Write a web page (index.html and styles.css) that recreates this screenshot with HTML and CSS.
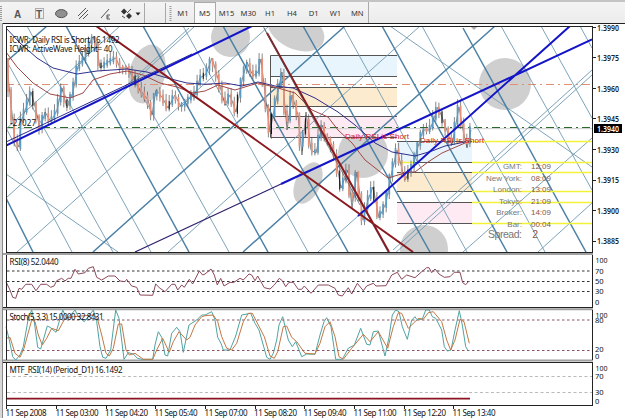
FILE: index.html
```
<!DOCTYPE html>
<html>
<head>
    <meta charset="utf-8">
    <title>Chart</title>
    <link rel="stylesheet" href="styles.css">
</head>
<body>
<div class="toolbar">
    <svg class="tools" width="172" height="21" viewBox="0 2 172 21">
        <path class="grip" d="M1 6V22"/>
        <text class="tool-letter" x="14" y="18" textLength="7">A</text>
        <rect class="dotted" x="35.5" y="8.500" width="8" height="10"/>
        <text class="tool-letter" x="36" y="17.500" textLength="7">T</text>
        <ellipse cx="61.300" cy="13.600" rx="5.800" ry="4" fill="#909090" stroke="#555"/>
        <path class="stroke" d="M78 16L86 8M79 19L88 10M83 19L88 14"/>
        <path class="stroke" d="M101 18L109 9M110 15H107V19H110M107 17H109"/>
        <path d="M124 8.500l3 3-3 3-3-3zM129 13l3 3-3 3-3-3z" fill="#333"/>
        <path class="stroke" d="M127 13L131 9M122 16L125 18"/>
        <path d="M135.500 12.500h5l-2.500 3z" fill="#222"/>
        <path d="M144.500 3V23M165.500 3V23" stroke="#a8a8a8"/>
        <path class="grip" d="M170.500 6V22"/>
    </svg>
    <div class="frames">
        <span>M1</span><span class="active">M5</span><span>M15</span><span>M30</span><span>H1</span><span>H4</span><span>D1</span><span>W1</span><span>MN</span>
    </div>
</div>
<div class="terminal">
    <svg class="panel" width="622" height="230" viewBox="3 23 622 230">
        <defs><clipPath id="plot"><rect x="6" y="26" width="586" height="226"/></clipPath></defs>
        <g clip-path="url(#plot)">
            <g fill="#cfcfcf">
                <ellipse cx="147" cy="74" rx="18" ry="30" transform="rotate(14 147 74)"/>
                <circle cx="230.500" cy="37.500" r="19.500"/>
                <ellipse cx="296" cy="30" rx="30" ry="19" transform="rotate(25 296 30)"/>
                <circle cx="505" cy="84" r="26"/>
                <ellipse cx="308" cy="183" rx="12.500" ry="22" transform="rotate(25 308 183)"/>
                <circle cx="363" cy="153" r="25"/>
                <circle cx="424" cy="249" r="24"/>
            </g>
            <!-- fibo zones -->
            <path d="M271 56H397V76H271z" fill="#e8f5fd"/>
            <path d="M271 88H397V106H271z" fill="#fdebd0"/>
            <path d="M271 117H397V137H271z" fill="#fdeaf2"/>
            <path d="M397 142H472V162H397z" fill="#e8f5fd"/>
            <path d="M397 173H472V191H397z" fill="#fdebd0"/>
            <path d="M397 203H472V223H397z" fill="#fdeaf2"/>
            <path class="fibo" d="M397 55.500H270.500V137.500H397M270 76.500H397M270 87.500H397M270 106.500H397M270 116.500H397M397 141.500H472M397 162.500H472M397 172.500H472M397 191.500H472M397 202.500H472M397 223.500H472"/>
            <path d="M6 84.500H592" stroke="#e09070" stroke-dasharray="8 4 2 4"/>
            <path d="M6 128.700H592" stroke="#ccc"/>
            <path d="M6 127.500H592" stroke="#2c6a2c" stroke-dasharray="8 4 2 4"/>
            <!-- pitchfork grid -->
            <path class="grid" d="M6 128L72 252M6 60L113 252M27 26L151 252M104 26L229 252M183 26L308 252M263 26L388 252M343 26L467 252M422 26L545 252M501 26L592 190M541 26L592 118M580 26L592 48"/>
            <path class="grid" d="M6 129L120 26M6 198L195 26M43 162L189 28M17 252L269 26M168 252L420 26M318 252L358 216M393 250L592 70M393 255L592 75M463 252L592 138M538 252L592 203M6 174L118 252M390 26L592 167"/>
            <path class="grid thick" d="M6 198L33 252M66 26L189 252M143 26L268 252M223 26L348 252M303 26L430 252M382 26L507 252M463 28L586 252M6 62L47 26M93 252L345 26M243 252L495 26"/>
            <path class="level" d="M472 141.500H592M472 162.500H592M472 172.500H592M472 191.500H592M472 202.500H592M472 223.500H592M397 162.500H413"/>
            <g id="candles"></g>
            <path class="ma-slow" d="M6 28L20 43 37 58 53 68 77 74 97 71 127 69 147 72 167 78 187 83 205 84.300 225 83 242 86 258 82 275 86 293 88 315 98 338 112 355 125 375 143 392 152 398 153 415 156 432 151 445 146 465 142"/>
            <path class="ma-fast" d="M6 52L17 67 33 83 50 94 70 98 83 93 93 80 110 74 127 71 143 75 160 83 177 87 193 93 205 91 218 85 235 90 258 83 278 88 295 93 312 110 328 117 338 130 352 143 365 160 388 178 408 172 415 172 428 162 442 153 465 143"/>
            <path d="M6 142L192 54" stroke="#2a2a8c"/>
            <path d="M135 252L281 184" stroke="#30206e" stroke-width="1.200"/>
            <path d="M6 145.500L252 26M281 184L592 39.500M358 216L570 26" stroke="#1414c8" stroke-width="2"/>
            <path d="M96 26L413 252M267 33L389 252" stroke="#8a1a20" stroke-width="2"/>
            <path d="M264 28L360 205" stroke="#555" stroke-width=".7"/>
            <path d="M470 26h8l-4 4z" fill="#aaa"/>
            <text class="label" x="9.500" y="43" textLength="110">ICWR: Daily RSI is Short 16.1492</text>
            <text class="label" x="9.500" y="52" textLength="103">ICWR: ActiveWave Height= 40</text>
            <text class="label" x="10" y="126" textLength="26">-27027</text>
            <text class="signal" x="345" y="139" textLength="64">Daily RSI is Short</text>
            <text class="signal" x="420" y="143" textLength="64">Daily RSI is Short</text>
            <g class="clock">
                <text x="522" y="168.500">GMT:</text><text class="time" x="551" y="168.500">12:09</text>
                <text x="522" y="180.500">New York:</text><text class="time" x="551" y="180.500">08:09</text>
                <text x="522" y="192">London:</text><text class="time" x="551" y="192">13:09</text>
                <text x="522" y="203.500">Tokyo:</text><text class="time" x="551" y="203.500">21:09</text>
                <text x="522" y="215">Broker:</text><text class="time" x="551" y="215">14:09</text>
                <text x="522" y="227">Bar:</text><text class="time" x="551" y="227">00:04</text>
                <text class="spread" x="522" y="238" textLength="34">Spread:</text><text class="time spread" x="538" y="238">2</text>
            </g>
        </g>
        <path class="frame" d="M3 23.500H625M6 26.500H593M6.500 26V253M592.500 26V253M6 252.500H593"/>
        <path class="frame" d="M593 27.500h3M593 57.500h3M593 88.500h3M593 118.500h3M593 149.500h3M593 180.500h3M593 210.500h3M593 241.500h3"/>
        <g class="price">
            <text x="597" y="30.500" textLength="22" lengthAdjust="spacingAndGlyphs">1.3990</text>
            <text x="597" y="60.500" textLength="22" lengthAdjust="spacingAndGlyphs">1.3975</text>
            <text x="597" y="91.500" textLength="22" lengthAdjust="spacingAndGlyphs">1.3960</text>
            <text x="597" y="121.500" textLength="22" lengthAdjust="spacingAndGlyphs">1.3945</text>
            <text x="597" y="152.500" textLength="22" lengthAdjust="spacingAndGlyphs">1.3930</text>
            <text x="597" y="183" textLength="22" lengthAdjust="spacingAndGlyphs">1.3915</text>
            <text x="597" y="213.500" textLength="22" lengthAdjust="spacingAndGlyphs">1.3900</text>
            <text x="597" y="244" textLength="22" lengthAdjust="spacingAndGlyphs">1.3885</text>
        </g>
        <rect x="594" y="124" width="28" height="9"/>
        <text class="price now" x="597" y="131.500" textLength="22" lengthAdjust="spacingAndGlyphs">1.3940</text>
    </svg>

    <svg class="panel" width="622" height="55" viewBox="3 253 622 55">
        <path class="divider" d="M3 254H593"/>
        <path d="M7 271H592M7 281.500H592M7 291.500H592" stroke="#333" stroke-dasharray="2.500 2.500"/>
        <g id="rsi"></g>
        <text class="label" x="9.500" y="264.500" textLength="49">RSI(8) 52.0440</text>
        <path class="frame" d="M6.500 255V308M592.500 255V308M3 307.500H593"/>
        <g class="scale">
            <text x="595.500" y="262.500" textLength="12" lengthAdjust="spacingAndGlyphs">100</text><text x="595" y="273.500">70</text><text x="595" y="284">50</text><text x="595" y="294">30</text><text x="595" y="305">0</text>
        </g>
    </svg>

    <svg class="panel" width="622" height="54" viewBox="3 308 622 54">
        <path class="divider" d="M3 309.200H593M3 360.500H593"/>
        <path d="M7 320H592M7 350.500H592" stroke="#8a5560" stroke-dasharray="2.500 2.500"/>
        <g id="stoch"></g>
        <text class="label" x="9.500" y="320" textLength="94">Stoch(5,3,3) 15.0000 32.8431</text>
        <path class="frame" d="M6.500 310V360M592.500 310V360"/>
        <g class="scale">
            <text x="595.500" y="317.500" textLength="12" lengthAdjust="spacingAndGlyphs">100</text><text x="595" y="322.500">80</text><text x="595" y="352">20</text><text x="595" y="359">0</text>
        </g>
    </svg>

    <svg class="panel" width="622" height="56" viewBox="3 362 622 56">
        <path d="M7 376.500H592M7 392.500H592" stroke="#bbb" stroke-dasharray="3 2.500"/>
        <path d="M6 398.700H470" stroke="#8a1420" stroke-width="1.700"/>
        <text class="label" x="9.500" y="373" textLength="113">MTF_RSI(14) (Period_D1) 16.1492</text>
        <path class="frame" d="M3 362.500H593M6.500 362V406M592.500 362V406M6 405.500H593"/>
        <path class="frame" d="M6.500 406v3M56.500 406v3M106.500 406v3M155.500 406v3M205.500 406v3M255.500 406v3M304.500 406v3M354.500 406v3M404.500 406v3M453.500 406v3"/>
        <g class="scale">
            <text x="595.500" y="371" textLength="12" lengthAdjust="spacingAndGlyphs">100</text><text x="595" y="379">70</text><text x="595" y="395">30</text><text x="595" y="403.500">0</text>
        </g>
        <g class="label">
            <text x="5.500" y="416" textLength="41">11 Sep 2008</text>
            <text x="55.500" y="416" textLength="43">11 Sep 03:00</text>
            <text x="105" y="416" textLength="43">11 Sep 04:20</text>
            <text x="154.500" y="416" textLength="43">11 Sep 05:40</text>
            <text x="204.500" y="416" textLength="43">11 Sep 07:00</text>
            <text x="254" y="416" textLength="43">11 Sep 08:20</text>
            <text x="303.500" y="416" textLength="43">11 Sep 09:40</text>
            <text x="353.500" y="416" textLength="43">11 Sep 11:00</text>
            <text x="403" y="416" textLength="43">11 Sep 12:20</text>
            <text x="452.500" y="416" textLength="43">11 Sep 13:40</text>
        </g>
    </svg>
</div>
<script src="chart.js"></script>
</body>
</html>
```
FILE: styles.css
```
body {
    margin: 0;
    background: #f0f0f0;
    font-family: "Noto Sans", sans-serif;
    width: 625px;
    height: 418px;
    overflow: hidden;
}

.toolbar {
    display: flex;
    height: 21px;
    border-top: 2px solid #c4c4c4;
    background: linear-gradient(#f4f4f4, #ececec);
}

.tools {
    flex: none;
}

.tool-letter {
    font: bold 10px "Liberation Sans", sans-serif;
    fill: #555;
}

.stroke {
    fill: none;
    stroke: #555;
}

.dotted {
    fill: none;
    stroke: #666;
    stroke-dasharray: 1 1;
}

.grip {
    stroke: #999;
    stroke-width: 2;
    stroke-dasharray: 1 1;
}

.frames {
    display: flex;
    border-right: 1px solid #aaa;
    font-size: 7.6px;
    color: #333;
}

.frames span {
    box-sizing: border-box;
    width: 21.8px;
    line-height: 23px;
    text-align: center;
}

.frames .active {
    background: #f9f9f9;
    border: 1px solid #aaa;
    border-bottom: none;
    line-height: 21px;
}

.terminal {
    display: flex;
    flex-direction: column;
    box-sizing: border-box;
    height: 395px;
    border-left: 3px solid #d8d8d8;
    background: #fff;
}

.panel {
    display: block;
    flex: none;
    border-left: 1px solid #888;
    margin-left: -1px;
}

.frame {
    fill: none;
    stroke: #222;
}

.divider {
    stroke: #a0a0a0;
    stroke-width: 2;
}

.fibo {
    fill: none;
    stroke: #555;
}

.level {
    fill: none;
    stroke: #f2f23a;
    stroke-width: 1.3;
}

.grid {
    fill: none;
    stroke: #6f9ab2;
    stroke-width: .9;
}

.thick {
    stroke: #4d82a6;
    stroke-width: 1.5;
}

.ma-slow {
    fill: none;
    stroke: #30308c;
}

.ma-fast {
    fill: none;
    stroke: #a04848;
}

.label {
    font-size: 8px;
    fill: #111;
}

.signal {
    font: 8px "Liberation Sans", sans-serif;
    fill: #d42020;
}

.clock {
    font: 8px "Liberation Sans", sans-serif;
    fill: #777;
    text-anchor: end;
}

.time {
    fill: #85554a;
}

.spread {
    font-size: 10.5px;
}

.price {
    font-size: 8px;
    font-weight: 600;
    fill: #222;
}

.now {
    fill: #fff;
}

.scale {
    font-size: 7.6px;
    fill: #111;
}

.up {
    stroke: #5a9ac4;
}

.down {
    stroke: #e8917a;
}

.wick {
    stroke: #555;
    stroke-width: .7;
    fill: none;
}

.doji {
    stroke: #111;
}
```
FILE: chart.js
```
const NS = 'http://www.w3.org/2000/svg';

function add(id, tag, attrs) {
    const el = document.createElementNS(NS, tag);
    for (const k in attrs) el.setAttribute(k, attrs[k]);
    document.getElementById(id).appendChild(el);
}

// indicator data comes in blocks, three units per pixel
function plot(id, blocks, color) {
    const pts = [];
    blocks.forEach(([offset, data]) => {
        data.split(' ').forEach(p => {
            const [x, y] = p.split(',').map(Number);
            pts.push((offset + x / 3).toFixed(1) + ',' + (250 + y / 3).toFixed(1));
        });
    });
    add(id, 'polyline', { points: pts.join(' '), fill: 'none', stroke: color });
}

plot('rsi', [
    [0, '18,95 30,120 38,142 47,145 57,115 65,118 77,103 95,103 108,122 122,103 140,103 152,112 162,108 170,92 185,85 195,93 205,85 213,85 225,58 235,72 255,68 265,55 280,50 290,82 305,90 325,78 345,78 360,93 375,95 380,88 395,108 410,112 420,135 458,136 467,102 480,115 495,125 515,103 525,103 533,120 545,105 553,112 568,88 578,102 598,63 608,75'],
    [205, '0,72 18,57 28,75 37,105 47,85 57,108 75,97 85,98 105,85 115,90 132,72 140,75 150,92 158,78 178,113 195,117 208,105 223,85 232,92 242,110 252,97 265,97 280,118 290,118 298,108 318,130 340,105 370,105 390,115 400,135 412,138 430,113 440,132 457,100 475,122 485,108 505,100 513,108 543,107 560,75 577,67 590,88 605,75'],
    [415, '0,83 20,65 35,53 42,53 50,68 60,57 72,72 88,82 105,80 118,67 135,67 143,98 152,104 162,93']
], '#8c4a58');

plot('stoch', [
    [0, '18,230 28,270 38,320 47,330 60,315 70,290 85,205 95,180 103,215 113,292 122,297 142,228 150,232 168,247 188,180 200,205 212,195 225,180 235,200 253,215 280,180 290,215 300,290 308,322 318,325 332,300 347,180 357,205 372,328 385,308 400,312 412,325 425,328 458,328 465,285 475,245 485,262 495,315 503,318 515,250 530,232 540,245 550,307 567,225 590,210 605,195'],
    [205, '0,195 20,185 30,210 38,262 48,280 55,300 75,300 92,258 110,195 137,190 150,220 162,240 185,322 195,328 205,310 215,270 222,225 233,200 250,270 262,290 272,275 290,320 305,312 330,313 345,255 357,215 365,203 378,230 392,328 412,328 430,295 448,285 467,235 485,283 495,285 505,245 520,243 540,318 552,262 562,195 572,180 582,185 592,230 607,268 620,210'],
    [415, '0,200 5,208 22,208 32,180 43,180 52,200 62,205 80,240 88,290 97,303 108,300 120,240 133,182 142,225 152,290 160,303']
], '#4fa3a3');

plot('stoch', [
    [0, '18,265 30,262 45,310 60,322 72,295 95,210 105,215 115,255 127,285 140,265 155,235 175,242 195,205 220,200 280,195 292,205 305,255 318,310 328,318 340,295 355,222 365,222 378,300 388,315 405,310 430,328 458,328 470,300 488,265 508,307 520,275 537,245 560,270 570,262 585,225 605,200'],
    [205, '0,197 25,195 38,215 50,260 65,295 80,300 95,280 115,215 130,190 142,190 160,225 178,260 195,318 208,325 218,305 235,230 245,228 260,262 275,275 300,310 330,312 345,280 360,230 375,215 390,260 402,320 415,328 440,295 475,253 495,275 520,245 548,295 565,230 580,188 590,190 610,235'],
    [415, '0,215 12,205 25,208 40,188 55,185 80,215 95,270 107,300 120,270 135,208 147,215 163,280']
], '#c27845');

const swings = [[6, 55], [10, 95], [15, 140], [19, 147], [21, 122], [26, 108], [31, 92], [36, 110], [40, 130], [45, 112], [51, 122], [57, 110], [62, 88], [67, 108], [73, 92], [78, 66], [85, 58], [92, 37], [96, 42], [100, 68], [108, 62], [116, 58], [120, 68], [128, 68], [134, 78], [140, 90], [148, 100], [152, 115], [156, 90], [162, 97], [168, 108], [175, 95], [181, 107], [190, 98], [195, 95], [200, 78], [206, 74], [212, 58], [217, 75], [225, 105], [230, 95], [236, 112], [242, 80], [247, 62], [253, 76], [258, 72], [261, 59], [264, 85], [270, 132], [275, 105], [282, 72], [287, 130], [292, 95], [298, 115], [302, 155], [306, 112], [311, 150], [316, 153], [322, 125], [326, 137], [330, 140], [335, 155], [341, 188], [348, 170], [352, 208], [357, 172], [363, 220], [368, 200], [373, 187], [379, 218], [386, 203], [390, 180], [397, 150], [405, 180], [413, 165], [417, 150], [423, 130], [430, 130], [438, 107], [445, 125], [452, 145], [459, 107], [463, 130], [467, 148], [471, 130]];

function priceAt(x) {
    let i = 1;
    while (i < swings.length - 1 && swings[i][0] < x) i++;
    const [x0, y0] = swings[i - 1], [x1, y1] = swings[i];
    return y0 + (y1 - y0) * (x - x0) / (x1 - x0);
}

add('candles', 'polyline', { points: swings.map(s => s.join(',')).join(' '), class: 'wick' });
for (let i = 0; i < 150; i++) {
    const x = 8 + i * 3.1;
    const open = priceAt(x - 1.5), close = priceAt(x + 1.5);
    const wob = Math.abs(Math.sin(i * 12.9)) * 6;
    const top = Math.min(open, close) - 2, bottom = Math.max(open, close) + 2;
    add('candles', 'path', { d: `M${x} ${top - wob}V${bottom + 5 - wob / 2}`, class: 'wick' });
    const type = i % 11 == 8 ? 'doji' : close < open ? 'up' : 'down';
    add('candles', 'path', { d: `M${x} ${top}V${bottom}`, class: type, 'stroke-width': type == 'doji' ? 1 : 1.7 });
}
```
